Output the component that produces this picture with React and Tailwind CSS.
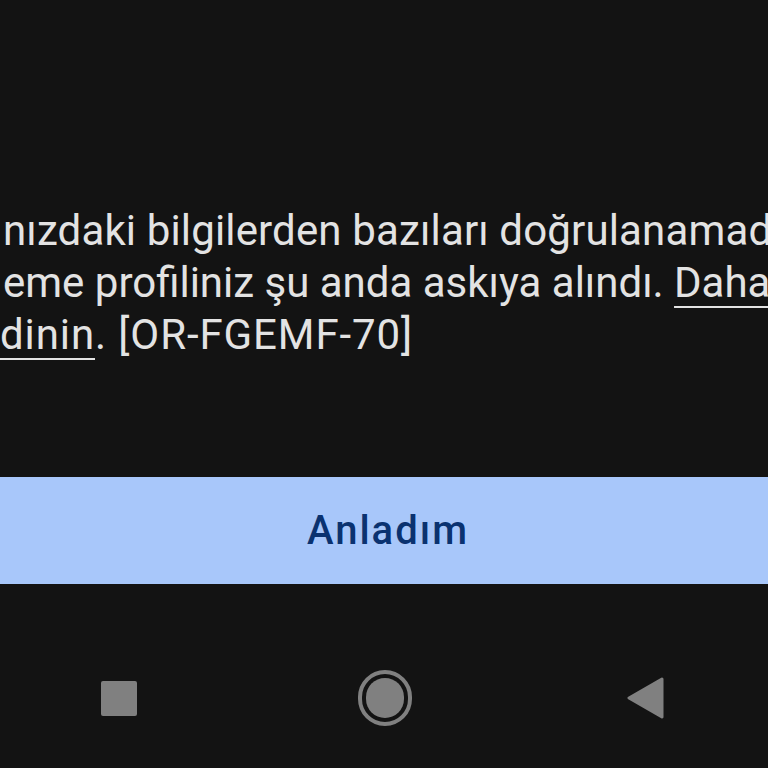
export default function App() {
  return (
    <div className="w-[768px] h-[768px] bg-[#131313] overflow-hidden flex flex-col" style={{ fontFamily: 'Roboto, "Open Sans", sans-serif' }}>
      {/* Message text (cropped paragraph) */}
      <div className="pt-[205px] text-[#e3e3e3] text-[42px] leading-[52px] whitespace-nowrap">
        <div className="pl-[3px] tracking-[0.15px]">nızdaki bilgilerden bazıları doğrulanamadı</div>
        <div className="pl-[3px]">
          eme profiliniz şu anda askıya alındı.{' '}
          <span className="underline underline-offset-[9px] decoration-2">Daha fazla</span>
        </div>
        <div className="tracking-[0.9px]">
          <span className="underline underline-offset-[9px] decoration-2">dinin</span>. [OR-FGEMF-70]
        </div>
      </div>

      {/* Confirm button */}
      <button className="mt-[116px] h-[107px] w-full pl-[8px] bg-[#a8c7fa] text-[#0a3270] text-[40px] font-medium tracking-[2px] flex items-center justify-center">
        Anladım
      </button>

      {/* Navigation bar */}
      <div className="flex-1 flex items-center pl-[101px] pt-[44px]">
        <div className="w-[36px] h-[35px] bg-[#808080] rounded-[2px]" />
        <div className="ml-[221px] w-[54px] h-[56px] rounded-full border-[4px] border-[#808080] flex items-center justify-center">
          <div className="w-[38px] h-[40px] rounded-full bg-[#808080]" />
        </div>
        <svg className="ml-[214px]" width="38" height="42" viewBox="0 0 38 42">
          <path d="M36 2 L3 21 L36 40 Z" fill="#808080" stroke="#808080" strokeWidth="3" strokeLinejoin="round" />
        </svg>
      </div>
    </div>
  );
}
